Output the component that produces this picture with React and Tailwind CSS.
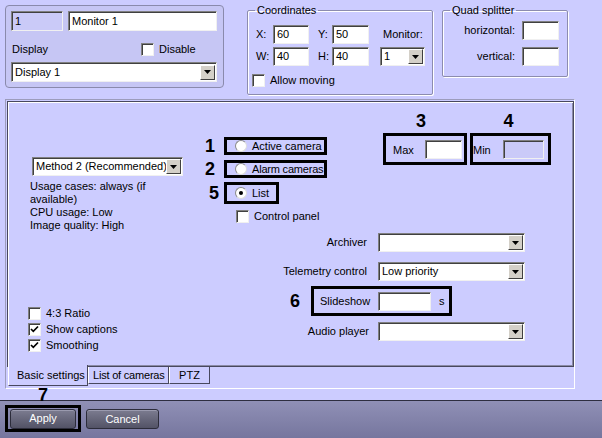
import clsx from "clsx";

const sunken =
  "border border-t-[#808080] border-l-[#808080] border-r-[#f0f0f0] border-b-[#f0f0f0] shadow-[inset_1px_1px_0_#404040]";

const Field = ({ value, className, disabled }) => (
  <div
    className={clsx(
      "flex items-center pl-[3px] h-[19px]",
      sunken,
      disabled ? "bg-[#cacaf8]" : "bg-white",
      className
    )}
  >
    {value}
  </div>
);

const Select = ({ value, className }) => (
  <div className={clsx("flex items-center h-[19px] bg-white", sunken, className)}>
    <span className="flex-1 pl-[3px] overflow-hidden">{value}</span>
    <span className="w-[15px] h-[15px] mr-[1px] flex items-center justify-center bg-[#d4d0c8] border border-t-white border-l-white border-r-[#404040] border-b-[#404040]">
      <svg width="7" height="4" viewBox="0 0 7 4">
        <path d="M0 0h7L3.5 4z" fill="#000" />
      </svg>
    </span>
  </div>
);

const Check = ({ checked }) => (
  <span
    className={clsx(
      "w-[13px] h-[13px] shrink-0 bg-white flex items-center justify-center",
      sunken
    )}
  >
    {checked && (
      <svg width="9" height="9" viewBox="0 0 9 9">
        <path d="M1 4l2.3 2.3L8 1.5" stroke="#000" strokeWidth="1.7" fill="none" />
      </svg>
    )}
  </span>
);

const Radio = ({ checked }) => (
  <span className="w-[12px] h-[12px] shrink-0 rounded-full bg-white border border-[#8a8a8a] border-b-[#dcdcdc] border-r-[#dcdcdc] flex items-center justify-center">
    {checked && <span className="w-[4px] h-[4px] rounded-full bg-black" />}
  </span>
);

const Num = ({ children, className }) => (
  <span className={clsx("font-bold text-[18px] leading-[18px] text-black", className)}>
    {children}
  </span>
);

const groupBox =
  "border border-[#8c8cae] rounded-[2px] shadow-[inset_1px_1px_0_#ffffff,1px_1px_0_#ffffff]";

const tabEdge =
  "border-l border-l-white border-r border-r-[#48485e] border-b border-b-[#48485e]";

export default function App() {
  return (
    <div className="w-[602px] h-[438px] overflow-hidden whitespace-nowrap bg-[#ccccff] text-black text-[11px] leading-[13px] font-['Liberation_Sans',Arial,sans-serif]">
      {/* top row */}
      <div className="flex items-start h-[99px] pl-[5px]">
        <div className="mt-[5px] w-[219px] h-[83px] rounded-[4px] border border-[#8a8aac] bg-[#c6c6f4] pt-[5px] pl-[5px]">
          <div className="flex gap-[5px]">
            <Field value="1" disabled className="w-[52px] h-[20px]" />
            <Field value="Monitor 1" className="w-[149px] h-[20px]" />
          </div>
          <div className="flex items-center h-[14px] mt-[11px] pl-[1px]">
            <span className="w-[129px]">Display</span>
            <Check />
            <span className="ml-[5px]">Disable</span>
          </div>
          <Select value="Display 1" className="mt-[6px] w-[206px] h-[20px]" />
        </div>

        <fieldset className={clsx("ml-[23px] mt-[4px] w-[186px] h-[91px]", groupBox)}>
          <legend className="ml-[7px] px-[2px] leading-[13px]">Coordinates</legend>
          <div className="flex mt-[8px] pl-[8px]">
            <div className="flex flex-col gap-[3px]">
              <div className="flex items-center h-[19px]">
                <span className="w-[17px]">X:</span>
                <Field value="60" className="w-[36px]" />
                <span className="ml-[9px] w-[14px]">Y:</span>
                <Field value="50" className="w-[37px]" />
              </div>
              <div className="flex items-center h-[19px]">
                <span className="w-[17px]">W:</span>
                <Field value="40" className="w-[36px]" />
                <span className="ml-[9px] w-[14px]">H:</span>
                <Field value="40" className="w-[37px]" />
              </div>
            </div>
            <div className="ml-[11px] flex flex-col gap-[3px]">
              <div className="h-[19px] flex items-center pl-[3px]">Monitor:</div>
              <Select value="1" className="w-[45px]" />
            </div>
          </div>
          <div className="flex items-center mt-[8px] pl-[4px]">
            <Check />
            <span className="ml-[5px]">Allow moving</span>
          </div>
        </fieldset>

        <fieldset className={clsx("ml-[9px] mt-[4px] w-[126px] h-[73px]", groupBox)}>
          <legend className="ml-[7px] px-[2px] leading-[13px]">Quad splitter</legend>
          <div className="flex flex-col items-end gap-[7px] mt-[4px] pr-[8px]">
            <div className="flex items-center">
              <span>horizontal:</span>
              <Field value="" className="ml-[7px] w-[37px]" />
            </div>
            <div className="flex items-center">
              <span>vertical:</span>
              <Field value="" className="ml-[7px] w-[37px]" />
            </div>
          </div>
        </fieldset>
      </div>

      {/* tab control */}
      <div className="ml-[5px] w-[570px] h-[290px] border border-t-[#9c9cbc] border-l-[#9c9cbc] border-b-white border-r-white p-[1px]">
        <div className="w-[567px] h-[266px] border border-[#48485e] shadow-[inset_1px_1px_0_#ffffff,inset_-1px_-1px_0_#8a8aa6]">
          <div className="flex h-[128px]">
            <div className="ml-[22px] w-[173px] pt-[55px]">
              <Select value="Method 2 (Recommended)" className="ml-[2px] w-[151px]" />
              <p className="mt-[4px]">
                Usage cases: always (if
                <br />
                available)
                <br />
                CPU usage: Low
                <br />
                Image quality: High
              </p>
            </div>

            <div className="w-[124px] pt-[35px]">
              <div className="flex items-center">
                <Num className="w-[14px] text-center">1</Num>
                <div className="ml-[7px] w-[103px] h-[18px] border-[3px] border-black flex items-center pl-[8px]">
                  <Radio />
                  <span className="ml-[5px]">Active camera</span>
                </div>
              </div>
              <div className="flex items-center mt-[5px]">
                <Num className="w-[14px] text-center">2</Num>
                <div className="ml-[7px] w-[103px] h-[18px] border-[3px] border-black flex items-center pl-[8px]">
                  <Radio />
                  <span className="ml-[5px] tracking-[-0.2px]">Alarm cameras</span>
                </div>
              </div>
              <div className="flex items-center mt-[4px]">
                <Num className="w-[16px] text-right">5</Num>
                <div className="ml-[5px] w-[55px] h-[22px] border-[3px] border-black flex items-center pl-[8px]">
                  <Radio checked />
                  <span className="ml-[5px]">List</span>
                </div>
              </div>
              <div className="flex items-center mt-[6px] pl-[33px]">
                <Check />
                <span className="ml-[5px]">Control panel</span>
              </div>
            </div>

            <div className="ml-[56px] pt-[10px] flex gap-[3px]">
              <div className="flex flex-col">
                <Num className="text-center pr-[8px] mb-[3px]">3</Num>
                <div className="w-[84px] h-[32px] border-[3px] border-black flex items-center pl-[7px] pr-[2px]">
                  <span className="mt-[2px]">Max</span>
                  <Field value="" className="ml-auto w-[37px]" />
                </div>
              </div>
              <div className="flex flex-col">
                <Num className="text-center pr-[4px] mb-[3px]">4</Num>
                <div className="w-[81px] h-[32px] border-[3px] border-black flex items-center pr-[4px]">
                  <span className="mt-[2px]">Min</span>
                  <Field value="" disabled className="ml-auto w-[41px]" />
                </div>
              </div>
            </div>
          </div>

          <div className="flex">
            <div className="ml-[20px] w-[252px] pt-[75px]">
              <div className="flex items-center h-[16px]">
                <Check />
                <span className="ml-[5px]">4:3 Ratio</span>
              </div>
              <div className="flex items-center h-[16px]">
                <Check checked />
                <span className="ml-[5px]">Show captions</span>
              </div>
              <div className="flex items-center h-[16px]">
                <Check checked />
                <span className="ml-[5px]">Smoothing</span>
              </div>
            </div>

            <div className="pt-[3px]">
              <div className="flex items-center h-[19px]">
                <span className="w-[87px] text-right">Archiver</span>
                <Select value="" className="ml-[11px] w-[147px]" />
              </div>
              <div className="flex items-center h-[19px] mt-[10px]">
                <span className="w-[87px] text-right">Telemetry control</span>
                <Select value="Low priority" className="ml-[11px] w-[147px]" />
              </div>
              <div className="flex items-center mt-[5px]">
                <Num className="ml-[10px] w-[10px]">6</Num>
                <div className="ml-[11px] w-[141px] h-[30px] border-[3px] border-black flex items-center pl-[6px]">
                  <span className="w-[58px]">Slideshow</span>
                  <Field value="" className="w-[53px]" />
                  <span className="ml-[8px]">s</span>
                </div>
              </div>
              <div className="flex items-center h-[19px] mt-[6px]">
                <span className="w-[89px] text-right">Audio player</span>
                <Select value="" className="ml-[9px] w-[147px]" />
              </div>
            </div>
          </div>
        </div>

        <div className="flex items-start -mt-[2px] ml-[1px] relative">
          <div className={clsx("w-[80px] h-[21px] bg-[#ccccff] flex items-center pl-[8px] pt-[1px]", tabEdge)}>
            Basic settings
          </div>
          <div className={clsx("mt-[2px] h-[17px] pl-[4px] w-[81px] flex items-center tracking-[-0.2px]", tabEdge)}>
            List of cameras
          </div>
          <div className={clsx("mt-[2px] h-[17px] w-[41px] flex items-center justify-center", tabEdge)}>
            PTZ
          </div>
        </div>
      </div>

      {/* bottom bar */}
      <div className="relative mt-[11px] h-[38px] border-t border-[#2e2e40] bg-linear-to-b from-[#9090b6] to-[#76769e] flex items-start pt-[4px] pl-[5px]">
        <Num className="absolute left-[38px] -top-[15px]">7</Num>
        <div className="w-[76px] h-[27px] border-[3px] border-black flex items-center justify-center">
          <button className="w-[66px] h-[20px] rounded-[3px] border border-[#2c2c3a] bg-linear-to-b from-[#7c7c90] to-[#535366] text-white text-[11px] shadow-[inset_0_1px_0_#9a9aae]">
            Apply
          </button>
        </div>
        <button className="ml-[5px] mt-[4px] w-[73px] h-[20px] rounded-[3px] border border-[#2c2c3a] bg-linear-to-b from-[#7c7c90] to-[#535366] text-white text-[11px] shadow-[inset_0_1px_0_#9a9aae]">
          Cancel
        </button>
      </div>
    </div>
  );
}
